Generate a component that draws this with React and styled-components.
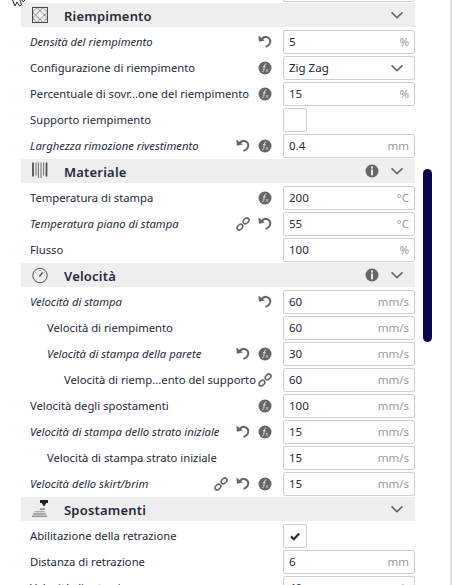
import React from "react";
import styled, { createGlobalStyle } from "styled-components";

const GlobalStyle = createGlobalStyle`
  html, body {
    margin: 0;
    padding: 0;
    background: #ffffff;
  }
  body {
    font-family: "Noto Sans", "Open Sans", sans-serif;
    color: #242a3a;
  }
`;

const Page = styled.div`
  position: relative;
  width: 452px;
  height: 585px;
  overflow: hidden;
  box-sizing: border-box;
  border-right: 2px solid #e2e2e2;
`;

const Panel = styled.div`
  width: 394px;
  margin-left: 21px;
  margin-top: -23px;
  display: flex;
  flex-direction: column;
`;

const SectionHeader = styled.div`
  height: 24px;
  margin: 0 0 2px;
  background: #eeeeee;
  display: flex;
  align-items: center;
  padding: 0 11px 0 10px;
`;

const SectionIcon = styled.svg`
  width: 18px;
  height: 18px;
  margin-right: 15px;
  flex: none;
  color: #4a4a4a;
`;

const SectionTitle = styled.span`
  flex: 1;
  padding-top: 2px;
  font-size: 13px;
  font-weight: 600;
  letter-spacing: 0.2px;
`;

const Row = styled.div`
  height: 26px;
  display: flex;
  align-items: center;
  padding-left: ${(p) => 9 + p.$depth * 17}px;
`;

const Label = styled.span`
  flex: 1;
  min-width: 0;
  padding-bottom: 2px;
  white-space: nowrap;
  font-size: 11.25px;
  font-style: ${(p) => (p.$changed ? "italic" : "normal")};
`;

const Actions = styled.div`
  display: flex;
  align-items: center;
  gap: 8px;
  margin-right: 11px;
  flex: none;
`;

const IconSvg = styled.svg`
  display: block;
  width: 14px;
  height: 14px;
  flex: none;
  color: #666666;
`;

const Field = styled.div`
  width: 132px;
  height: 24px;
  box-sizing: border-box;
  flex: none;
  border: 1px solid #cfcfcf;
  border-radius: 2px;
  background: #fff;
  display: flex;
  align-items: center;
  justify-content: space-between;
  padding: 0 5px 2px;
  font-size: 11.5px;
`;

const Unit = styled.span`
  color: #9a9a9a;
`;

const CheckBox = styled.div`
  width: 24px;
  height: 24px;
  box-sizing: border-box;
  flex: none;
  border: 1px solid #cfcfcf;
  border-radius: 2px;
  display: flex;
  align-items: center;
  justify-content: center;
`;

const CheckSlot = styled.div`
  width: 132px;
  flex: none;
`;

const Scrollbar = styled.div`
  position: absolute;
  left: 423px;
  top: 169px;
  width: 9px;
  height: 173px;
  border-radius: 5px;
  background: #0b0850;
`;

const Cursor = styled.svg`
  position: absolute;
  left: 11px;
  top: 0;
  width: 15px;
  height: 8px;
`;

const Chevron = ({ className }) => (
  <IconSvg className={className} viewBox="0 0 14 14">
    <path d="M1.5 4.4 7 9.6l5.5-5.2" fill="none" stroke="currentColor" strokeWidth="1.6" />
  </IconSvg>
);

const SelectChevron = styled(Chevron)`
  margin: 2px 5px 0 0;
`;

const UndoIcon = () => (
  <IconSvg viewBox="0 0 14 14">
    <path d="M3.5 4.4C5 2.2 7 1.5 9 2.1c2.4.8 3.5 3 3.2 5.1-.3 2.2-2 3.8-4.7 4.7" fill="none" stroke="currentColor" strokeWidth="2" />
    <path d="M.4.6l.5 6.1 5.9-1.2z" fill="currentColor" />
  </IconSvg>
);

const FxIcon = () => (
  <IconSvg viewBox="0 0 14 14">
    <circle cx="7" cy="7" r="6.5" fill="currentColor" />
    <path d="M8.4 3.2c-1-.3-1.6.1-1.8 1L5.7 9.4c-.2 1-.7 1.4-1.6 1.2M4.9 5.7h2.7" fill="none" stroke="#e2e2e2" strokeWidth="1" />
    <path d="M7.8 8l2.2 2.8M10.1 8l-2.3 2.8" fill="none" stroke="#d0d0d0" strokeWidth="0.8" />
  </IconSvg>
);

const LinkIcon = () => (
  <IconSvg viewBox="0 0 14 14">
    <ellipse cx="3.9" cy="10.1" rx="3.3" ry="2.3" transform="rotate(-45 3.9 10.1)" fill="none" stroke="currentColor" strokeWidth="1.6" />
    <ellipse cx="10.1" cy="3.9" rx="3.3" ry="2.3" transform="rotate(-45 10.1 3.9)" fill="none" stroke="currentColor" strokeWidth="1.6" />
  </IconSvg>
);

const InfoIcon = () => (
  <IconSvg viewBox="0 0 14 14">
    <circle cx="7" cy="7" r="6.5" fill="currentColor" />
    <rect x="6" y="2.6" width="2" height="2" fill="#eee" />
    <rect x="6" y="5.6" width="2" height="5.6" fill="#eee" />
  </IconSvg>
);

const CheckIcon = () => (
  <svg width="10" height="9" viewBox="0 0 10 9">
    <path d="M1 4.4l2.8 2.8L9.2 1.4" fill="none" stroke="#2b2b2b" strokeWidth="2.2" />
  </svg>
);

const icons = { undo: UndoIcon, fx: FxIcon, link: LinkIcon };

const InfillIcon = () => (
  <SectionIcon viewBox="0 0 18 18">
    <rect x="1.5" y="1.5" width="15" height="15" fill="none" stroke="currentColor" strokeWidth="1" />
    <path d="M1.5 6 6 1.5M1.5 12 12 1.5M6 16.5 16.5 6M12 16.5l4.5-4.5M1.5 6 12 16.5M1.5 12 6 16.5M6 1.5 16.5 12M12 1.5 16.5 6" fill="none" stroke="currentColor" strokeWidth="0.9" strokeDasharray="1.2 0.6" />
  </SectionIcon>
);

const MaterialIcon = () => (
  <SectionIcon viewBox="0 0 18 18">
    <path d="M2 .5v14M15.5 .5v14" stroke="currentColor" strokeWidth="1.7" />
    <path d="M5 .5v13M7.4 .5v15.5M10 .5v15.5M12.6 .5v13" stroke="currentColor" strokeWidth="0.8" />
  </SectionIcon>
);

const SpeedIcon = () => (
  <SectionIcon viewBox="0 0 18 18">
    <circle cx="9" cy="9.5" r="7.2" fill="none" stroke="currentColor" strokeWidth="1" />
    <path d="M8.5 10.5l3-4.2" stroke="currentColor" strokeWidth="1.3" />
    <path d="M4.5 6.5l.8.6M9 4v1M13.5 6.5l-.8.6" stroke="currentColor" strokeWidth="0.8" />
  </SectionIcon>
);

const TravelIcon = () => (
  <SectionIcon viewBox="0 0 18 18">
    <path d="M9 0h8v3h-1.6L13 6.5 10.6 3H9z" fill="#222" />
    <path d="M9 8.5h5v1.2H9z" fill="#666" />
    <path d="M3.5 11h10.5v1.4H3.5z" fill="#aaa" />
    <path d="M2 14h13M1 16.2h15" stroke="#666" strokeWidth="1" />
  </SectionIcon>
);

const sections = [
  {
    title: "Riempimento",
    icon: InfillIcon,
    rows: [
      { label: "Densità del riempimento", changed: true, actions: ["undo"], value: "5", unit: "%" },
      { label: "Configurazione di riempimento", actions: ["fx"], value: "Zig Zag", select: true },
      { label: "Percentuale di sovr...one del riempimento", actions: ["fx"], value: "15", unit: "%" },
      { label: "Supporto riempimento", check: "off" },
      { label: "Larghezza rimozione rivestimento", changed: true, actions: ["undo", "fx"], value: "0.4", unit: "mm" },
    ],
  },
  {
    title: "Materiale",
    icon: MaterialIcon,
    info: true,
    rows: [
      { label: "Temperatura di stampa", actions: ["fx"], value: "200", unit: "°C" },
      { label: "Temperatura piano di stampa", changed: true, actions: ["link", "undo"], value: "55", unit: "°C" },
      { label: "Flusso", value: "100", unit: "%" },
    ],
  },
  {
    title: "Velocità",
    icon: SpeedIcon,
    info: true,
    rows: [
      { label: "Velocità di stampa", changed: true, actions: ["undo"], value: "60", unit: "mm/s" },
      { label: "Velocità di riempimento", depth: 1, value: "60", unit: "mm/s" },
      { label: "Velocità di stampa della parete", depth: 1, changed: true, actions: ["undo", "fx"], value: "30", unit: "mm/s" },
      { label: "Velocità di riemp...ento del supporto", depth: 2, actions: ["link"], value: "60", unit: "mm/s" },
      { label: "Velocità degli spostamenti", actions: ["fx"], value: "100", unit: "mm/s" },
      { label: "Velocità di stampa dello strato iniziale", changed: true, actions: ["undo", "fx"], value: "15", unit: "mm/s" },
      { label: "Velocità di stampa strato iniziale", depth: 1, value: "15", unit: "mm/s" },
      { label: "Velocità dello skirt/brim", changed: true, actions: ["link", "undo", "fx"], value: "15", unit: "mm/s" },
    ],
  },
  {
    title: "Spostamenti",
    icon: TravelIcon,
    rows: [
      { label: "Abilitazione della retrazione", check: "on" },
      { label: "Distanza di retrazione", value: "6", unit: "mm" },
      { label: "Velocità di retrazione", value: "40", unit: "mm/s" },
    ],
  },
];

function SettingRow({ row }) {
  return (
    <Row $depth={row.depth || 0}>
      <Label $changed={row.changed}>{row.label}</Label>
      {row.actions && (
        <Actions>
          {row.actions.map((name) => {
            const Icon = icons[name];
            return <Icon key={name} />;
          })}
        </Actions>
      )}
      {row.check ? (
        <CheckSlot>
          <CheckBox>{row.check === "on" && <CheckIcon />}</CheckBox>
        </CheckSlot>
      ) : (
        <Field>
          <span>{row.value}</span>
          {row.select ? <SelectChevron /> : <Unit>{row.unit}</Unit>}
        </Field>
      )}
    </Row>
  );
}

export default function App() {
  return (
    <Page>
      <GlobalStyle />
      <Panel>
        <Row $depth={0}>
          <Label />
          <Field />
        </Row>
        {sections.map((section) => {
          const Icon = section.icon;
          return (
            <React.Fragment key={section.title}>
              <SectionHeader>
                <Icon />
                <SectionTitle>{section.title}</SectionTitle>
                {section.info && (
                  <Actions>
                    <InfoIcon />
                  </Actions>
                )}
                <Chevron />
              </SectionHeader>
              {section.rows.map((row) => (
                <SettingRow key={row.label} row={row} />
              ))}
            </React.Fragment>
          );
        })}
      </Panel>
      <Scrollbar />
      <Cursor viewBox="0 0 15 8">
        <path d="M1.5 0 4 6l2-4 2.5 4 2-1L9 0M11 0l1 2 2-2" fill="#fff" stroke="#222" strokeWidth="1" />
      </Cursor>
    </Page>
  );
}
